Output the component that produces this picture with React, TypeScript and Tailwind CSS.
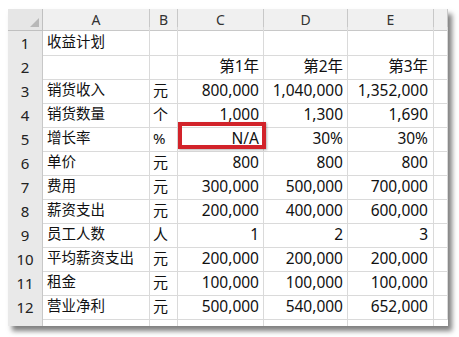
import React from 'react';

type Row = { a?: string; b?: string; c?: string; d?: string; e?: string };

const rows: Row[] = [
  { a: '收益计划' },
  { c: '第1年', d: '第2年', e: '第3年' },
  { a: '销货收入', b: '元', c: '800,000', d: '1,040,000', e: '1,352,000' },
  { a: '销货数量', b: '个', c: '1,000', d: '1,300', e: '1,690' },
  { a: '增长率', b: '%', c: 'N/A', d: '30%', e: '30%' },
  { a: '单价', b: '元', c: '800', d: '800', e: '800' },
  { a: '费用', b: '元', c: '300,000', d: '500,000', e: '700,000' },
  { a: '薪资支出', b: '元', c: '200,000', d: '400,000', e: '600,000' },
  { a: '员工人数', b: '人', c: '1', d: '2', e: '3' },
  { a: '平均薪资支出', b: '元', c: '200,000', d: '200,000', e: '200,000' },
  { a: '租金', b: '元', c: '100,000', d: '100,000', e: '100,000' },
  { a: '营业净利', b: '元', c: '500,000', d: '540,000', e: '652,000' },
];

const cols = 'grid grid-cols-[35px_107px_28px_86px_84px_86px_14px]';
const cell = 'border-r border-b border-[#dadada] flex items-center pt-[3px] overflow-hidden whitespace-nowrap';
const head = 'border-r border-b border-[#c8c8c8] bg-[#f0f0f0] flex items-center justify-center text-[14px] text-[#333]';

export default function App() {
  return (
    <div className="w-[459px] h-[337px] bg-white relative" style={{ fontFamily: '"Noto Sans", "Noto Sans CJK SC", sans-serif' }}>
      <div className="absolute left-[8px] top-[9px] w-[440px] h-[317px] overflow-hidden bg-white shadow-[4px_5px_5px_rgba(0,0,0,0.5)] text-[#111]">
        <div className={`${cols} h-[18px]`}>
          <div className="border-r border-b border-[#c0c0c0] bg-[#e6e6e6] relative">
            <div className="absolute right-[3px] bottom-[3px] w-0 h-0 border-l-[9px] border-l-transparent border-b-[9px] border-b-[#b8b8b8]" />
          </div>
          <div className={head}>A</div>
          <div className={head}>B</div>
          <div className={head}>C</div>
          <div className={head}>D</div>
          <div className={head}>E</div>
          <div className={head} />
        </div>
        {rows.map((r, i) => (
          <div key={i} className={`${cols} h-[24px]`}>
            <div className="border-r border-b border-[#c8c8c8] bg-[#e9e9e9] flex items-center justify-center pt-[5px] text-[15px] text-[#222]">
              {i + 1}
            </div>
            <div className={`${cell} pl-[4px] text-[14.5px]`}>{r.a}</div>
            <div className={`${cell} pl-[3px] text-[15px]`}>{r.b}</div>
            <div className={`${cell} justify-end pr-[4px] text-[15.5px]`}>{r.c}</div>
            <div className={`${cell} justify-end pr-[4px] text-[15.5px]`}>{r.d}</div>
            <div className={`${cell} justify-end pr-[5px] text-[15.5px]`}>{r.e}</div>
            <div className={cell} />
          </div>
        ))}
        <div className={`${cols} h-[24px]`}>
          <div className="border-r border-[#c8c8c8] bg-[#e9e9e9]" />
          <div className="border-r border-[#dadada]" />
          <div className="border-r border-[#dadada]" />
          <div className="border-r border-[#dadada]" />
          <div className="border-r border-[#dadada]" />
          <div className="border-r border-[#dadada]" />
          <div />
        </div>
      </div>
      <div className="absolute left-[178px] top-[122px] w-[88px] h-[27px] border-[4px] border-[#d2232a] shadow-[1px_1px_2px_rgba(0,0,0,0.3)]" />
    </div>
  );
}
